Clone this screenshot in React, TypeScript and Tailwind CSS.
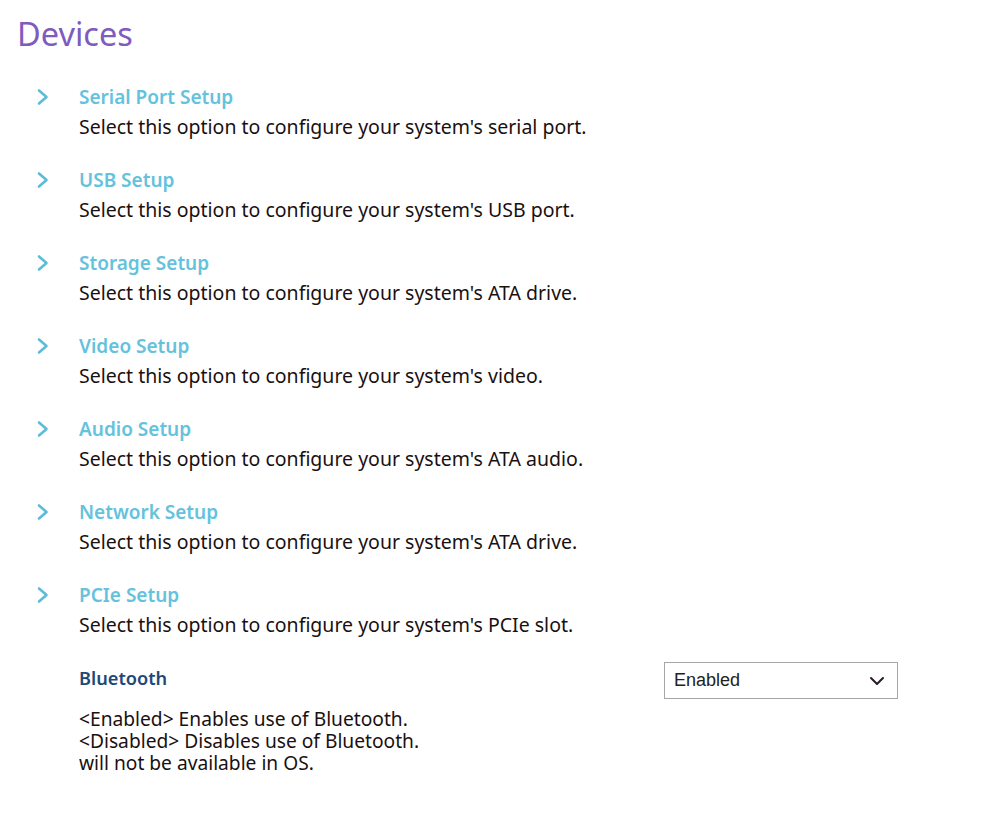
import { ChevronDown } from "lucide-react";

const items = [
  { title: "Serial Port Setup", desc: "Select this option to configure your system's serial port." },
  { title: "USB Setup", desc: "Select this option to configure your system's USB port." },
  { title: "Storage Setup", desc: "Select this option to configure your system's ATA drive." },
  { title: "Video Setup", desc: "Select this option to configure your system's video." },
  { title: "Audio Setup", desc: "Select this option to configure your system's ATA audio." },
  { title: "Network Setup", desc: "Select this option to configure your system's ATA drive." },
  { title: "PCIe Setup", desc: "Select this option to configure your system's PCIe slot." },
];

function Chevron() {
  return (
    <svg width="14" height="18" viewBox="0 0 14 18" fill="none">
      <polyline
        points="3,2.5 10.5,9 3,15.5"
        stroke="#5bbcd9"
        strokeWidth="2.6"
        strokeLinecap="round"
        strokeLinejoin="round"
      />
    </svg>
  );
}

export default function App() {
  return (
    <div className="min-h-screen bg-white pl-[17px] pt-[14px] font-['Noto_Sans',sans-serif] text-[#1a1010]">
      <h1 className="text-[32.5px] leading-[40px] text-[#7e5bbf]">Devices</h1>

      <div className="mt-[30px] flex flex-col gap-[28px]">
        {items.map((item) => (
          <div key={item.title} className="flex">
            <div className="w-[62px] pl-[19px] pt-[4px]">
              <Chevron />
            </div>
            <div>
              <div className="h-[26px] text-[19px] font-semibold leading-[26px] text-[#64c2dd]">
                {item.title}
              </div>
              <div className="mt-[4px] h-[25px] text-[19.5px] leading-[25px]">{item.desc}</div>
            </div>
          </div>
        ))}
      </div>

      <div className="mt-[27px] flex pl-[62px] pr-[100px]">
        <div className="flex-1 pt-[1px]">
          <div className="text-[18.2px] font-semibold leading-[26px] text-[#1f4878]">Bluetooth</div>
          <div className="mt-[17px] text-[19.2px] leading-[22px]">
            <div className="h-[22px]">&lt;Enabled&gt; Enables use of Bluetooth.</div>
            <div className="h-[22px]">&lt;Disabled&gt; Disables use of Bluetooth.</div>
            <div className="h-[22px]">will not be available in OS.</div>
          </div>
        </div>
        <div className="-mt-[2px] flex h-[37px] w-[234px] items-center justify-between border border-[#a6a6a6] pl-[9px] pr-[8px] font-['Liberation_Sans',sans-serif] text-[18px] text-[#222]">
          <span>Enabled</span>
          <ChevronDown className="h-6 w-6 text-[#2a1a2a]" strokeWidth={2} />
        </div>
      </div>
    </div>
  );
}
